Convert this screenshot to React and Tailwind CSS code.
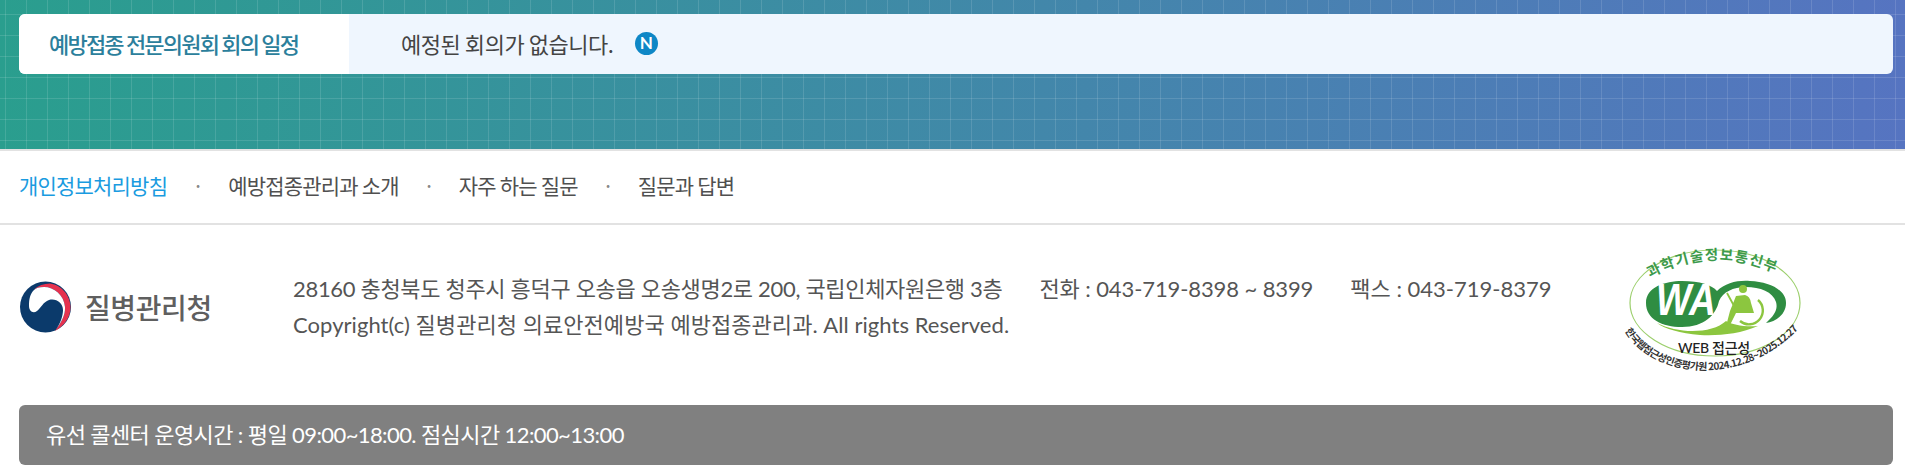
const kr = "font-['Noto_Sans_CJK_KR',sans-serif]";
const lato = "font-['Lato','Noto_Sans_CJK_KR',sans-serif]";

function KdcaEmblem() {
  return (
    <svg width="52" height="52" viewBox="0 0 52 52" className="shrink-0">
      <circle cx="25.5" cy="26" r="25.5" fill="#0b3a6b" />
      <path d="M14 9C18 4 24 3 30 2.500C42 4 50.500 15 50.500 26C50.500 36 45 44 35 50C41 42 45.500 34 45 26C44 14 34 6 24 6C19 6 16 7 14 9Z" fill="#e5324f" />
      <path d="M14 9C16 7 19 6 24 6C34 6 44 14 45 26C45.500 34 41 42 35 50C41 42 43 34 43 29C43 22 36 17 29 19C23 21 21 27 17 30C13 33 9 30 9 25C9 18 10 13 14 9Z" fill="#fff" />
    </svg>
  );
}

function WaMark() {
  return (
    <svg width="200" height="140" viewBox="0 0 200 140" className="shrink-0">
      <defs>
        <path id="arcTop" d="M30 35Q93 0 162 33" />
        <path id="arcBottom" d="M5 88C33 136 132 150 190 72" />
      </defs>
      <ellipse cx="95" cy="60" rx="85" ry="53" fill="none" stroke="#9ccf6d" strokeWidth="1.2" />
      <text fontSize="14.5" fontWeight="700" fill="#3d9a4b" fontFamily="Noto Sans CJK KR, sans-serif" letterSpacing="1.2">
        <textPath href="#arcTop">과학기술정보통신부</textPath>
      </text>
      <path d="M26 60C26 44 45 38 62 38C80 38 92 42 97 48C105 40 118 37 130 38C150 39 166 47 166 60C166 72 155 79 146 80C155 72 158 66 156 59C153 49 140 44 126 44C113 44 103 49 99 58C96 72 84 84 62 84C42 84 26 76 26 60Z" fill="#2f8d42" />
      <path d="M37 80C58 91 92 91 106 78C112 82 125 84 138 83C120 91 98 93 80 92C60 90 45 86 37 80Z" fill="#8cc63f" />
      <text x="36" y="72" fontSize="44" fontWeight="700" fontStyle="italic" fill="#fff" fontFamily="Liberation Sans, sans-serif" textLength="60" lengthAdjust="spacingAndGlyphs">WA</text>
      <circle cx="123" cy="46" r="4" fill="#8cc63f" />
      <path d="M116 53L125 52Q130 53 131 60L134 70L116 70L110 82L111 88L105 87L110 68Z" fill="#8cc63f" />
      <path d="M138 57A13 13 0 1 1 120 78" fill="none" stroke="#8cc63f" strokeWidth="2.400" />
      <path d="M107 50L113 61L121 60" fill="none" stroke="#8cc63f" strokeWidth="1.800" />
      <text x="58" y="110" fontSize="14" fontWeight="500" fill="#222" fontFamily="Lato, Noto Sans CJK KR, sans-serif" letterSpacing="-0.3">WEB 접근성</text>
      <text fontSize="10" fontWeight="700" fill="#333" fontFamily="Noto Sans CJK KR, sans-serif" letterSpacing="-0.6">
        <textPath href="#arcBottom">한국웹접근성인증평가원 2024.12.28~2025.12.27</textPath>
      </text>
    </svg>
  );
}

export default function App() {
  return (
    <div className="flex w-[1905px] flex-col bg-white">
      <div className="h-[151px] border-b-2 border-[#e2e2e2] bg-[linear-gradient(rgba(255,255,255,0.12)_1px,transparent_1px),linear-gradient(90deg,rgba(255,255,255,0.12)_1px,transparent_1px),linear-gradient(90deg,#2a9e8e,#5674c1)] bg-[size:21px_21px,21px_21px,100%_100%] bg-[position:5px_14px,5px_14px,0_0] pl-[19px] pr-[12px] pt-[14px]">
        <div className={`flex h-[60px] overflow-hidden rounded-md bg-[#eff6fe] ${kr}`}>
          <div className="flex w-[330px] items-center bg-white pb-[2px] pl-[30px] text-[22px] font-medium tracking-[-1.8px] text-[#2c7f9c]">
            예방접종 전문의원회 회의 일정
          </div>
          <div className="flex items-center pb-[2px] pl-[52px] text-[22px] tracking-[-0.45px] text-[#444]">
            <span>예정된 회의가 없습니다.</span>
            <span className="ml-[21px] flex h-[23px] w-[23px] items-center justify-center rounded-full bg-[#0e87c6] font-['Lato',sans-serif] text-[17px] font-bold text-white">
              N
            </span>
          </div>
        </div>
      </div>

      <nav className={`flex h-[74px] items-center border-b-2 border-[#e2e2e2] pb-[2px] pl-[19px] text-[21px] tracking-[-0.8px] text-[#505050] ${kr}`}>
        <a className="text-[#1a9be0]">개인정보처리방침</a>
        <span className="w-[61px] text-center text-[#888]">·</span>
        <a>예방접종관리과 소개</a>
        <span className="w-[60px] text-center text-[#888]">·</span>
        <a>자주 하는 질문</a>
        <span className="w-[60px] text-center text-[#888]">·</span>
        <a>질문과 답변</a>
      </nav>

      <div className="flex h-[180px] items-start">
        <div className="ml-[20px] mt-[56px] flex w-[273px] items-center gap-[13px]">
          <KdcaEmblem />
          <span className={`text-[28px] font-medium tracking-[-0.4px] text-[#5f5f5f] ${kr}`}>질병관리청</span>
        </div>
        <div className={`mt-[46px] w-[1327px] text-[22px] leading-[36px] text-[#555] ${lato}`}>
          <div className="flex">
            <span className="tracking-[-0.32px]">28160 충청북도 청주시 흥덕구 오송읍 오송생명2로 200, 국립인체자원은행 3층</span>
            <span className="ml-[37px] tracking-[-0.1px]">전화 : 043-719-8398 ~ 8399</span>
            <span className="ml-[37px]">팩스 : 043-719-8379</span>
          </div>
          <div className="tracking-[0.05px]">Copyright(c) 질병관리청 의료안전예방국 예방접종관리과. All rights Reserved.</div>
        </div>
        <div className="mt-[18px]">
          <WaMark />
        </div>
      </div>

      <div className={`ml-[19px] mr-[12px] flex h-[60px] items-center rounded-md bg-[#808080] pb-[2px] pl-[27px] text-[22px] tracking-[-0.6px] text-white ${lato}`}>
        유선 콜센터 운영시간 : 평일 09:00~18:00. 점심시간 12:00~13:00
      </div>
    </div>
  );
}
